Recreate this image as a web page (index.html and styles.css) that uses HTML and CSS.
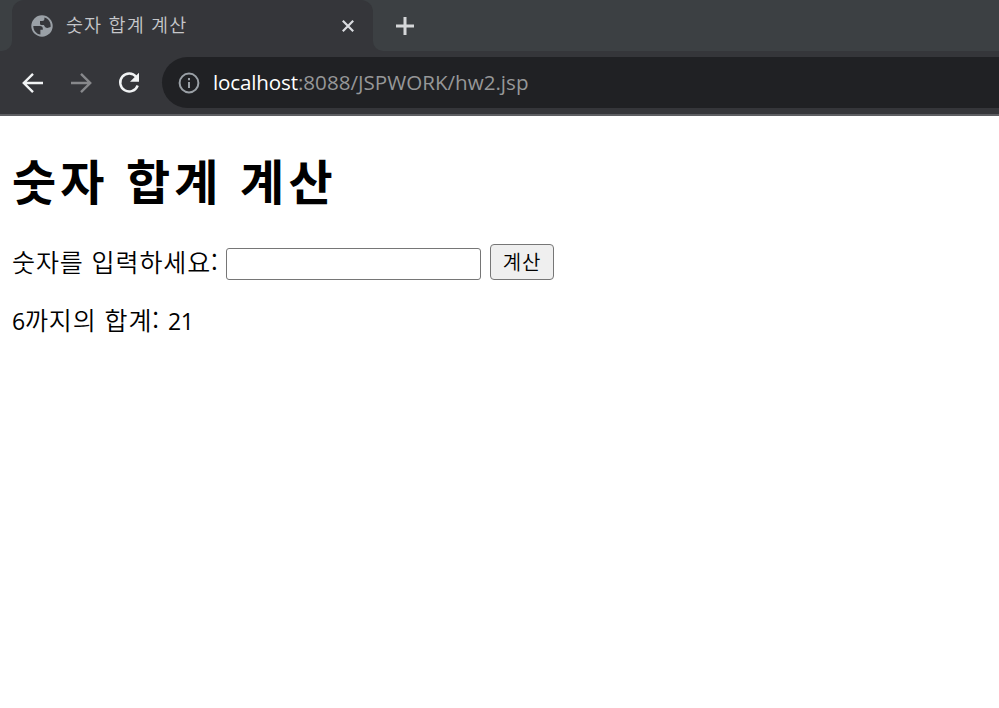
FILE: index.html
```html
<!DOCTYPE html>
<html lang="ko">
<head>
<meta charset="utf-8">
<title>숫자 합계 계산</title>
<link rel="stylesheet" href="styles.css">
</head>
<body>
<header class="browser">
  <div class="tabstrip">
    <div class="strip-left"></div>
    <div class="tab">
      <svg class="globe" viewBox="0 0 22 22"><circle cx="11" cy="11" r="10.7" fill="#9aa0a6"/><path d="M2.300 11H9c1.800 0 2.800 1 2.800 2.400v1.400H9.400v4.700C5.400 19 2.400 15.800 2.300 11ZM13.400 2.600V4c0 1.300-.8 2-2 2H9v2.400c0 1 .8 1.500 1.700 1.500h2.200c.8 1.900 1.800 3 3.500 3 1.200 0 2-.8 3.200-.8C20.200 7.500 17.400 3.700 13.400 2.600Z" fill="#35363a"/></svg>
      <span class="tab-title">숫자 합계 계산</span>
      <svg class="close" viewBox="0 0 14 14"><path d="M1.800 1.800 12.200 12.200M12.200 1.800 1.800 12.200" /></svg>
    </div>
    <div class="strip-right">
      <svg class="plus" viewBox="0 0 20 20"><path d="M10 1v18M1 10h18"/></svg>
    </div>
  </div>
  <div class="toolbar">
    <svg class="nav" viewBox="0 0 22 22"><path d="M21 11H2M11 1.800 1.800 11 11 20.200"/></svg>
    <svg class="nav dim" viewBox="0 0 22 22"><path d="M1 11h19M11 1.800 20.200 11 11 20.200"/></svg>
    <svg class="nav" viewBox="0 0 22 22"><path d="M18.200 4.800A9 9 0 1 0 19.700 13.500"/><path class="solid" d="M21 .8v9h-9z"/></svg>
    <div class="address">
      <svg class="info" viewBox="0 0 22 22"><circle cx="11" cy="11" r="9.400"/><path d="M11 10v6M11 6v2.200"/></svg>
      <span class="url"><b>localhost</b>:8088/JSPWORK/hw2.jsp</span>
    </div>
  </div>
</header>
<main class="page">
  <h1>숫자 합계 계산</h1>
  <form class="row">
    <label for="num">숫자를 입력하세요:</label>
    <input id="num" type="text">
    <button type="button">계산</button>
  </form>
  <p><span class="digits">6</span>까지의 합계: <span class="digits">21</span></p>
</main>
</body>
</html>
```
FILE: styles.css
```css
* { box-sizing: border-box; }
body {
  margin: 0;
  background: #fff;
  color: #000;
  font-family: "Open Sans", "Noto Sans CJK KR", sans-serif;
}
svg { display: block; flex: none; fill: none; }
.browser { height: 116px; background: #35363a; border-bottom: 2px solid #5d5e62; }
.tabstrip { display: flex; height: 51px; background: #35363a; }
.strip-left { width: 12px; background: #3c4043; border-bottom-right-radius: 10px; }
.tab {
  display: flex;
  align-items: center;
  width: 361px;
  padding: 0 18px 0 19px;
  background: linear-gradient(#3c4043, #3c4043) 0 0 / 100% 20px no-repeat;
  position: relative;
  z-index: 0;
}
.tab::before {
  content: "";
  position: absolute;
  inset: 0;
  z-index: -1;
  background: #35363a;
  border-radius: 12px 12px 0 0;
}
.globe { width: 22px; height: 22px; }
.tab-title {
  flex: 1;
  margin-left: 13px;
  padding-bottom: 3px;
  font: 350 18.5px/26px "Noto Sans CJK KR", sans-serif;
  letter-spacing: 1.1px;
  color: #c6c7ca;
}
.close { width: 14px; height: 14px; stroke: #dadce0; stroke-width: 2.2; }
.strip-right { flex: 1; background: #3c4043; border-bottom-left-radius: 10px; padding: 16px 0 0 22px; }
.plus { width: 20px; height: 20px; stroke: #d5d7d9; stroke-width: 3; }
.toolbar { display: flex; align-items: center; height: 63px; padding-left: 22px; gap: 26px; }
.nav { width: 22px; height: 22px; stroke: #f1f3f4; stroke-width: 2.4; }
.dim { stroke: #87888b; }
.solid { fill: #f1f3f4; stroke: none; }
.address {
  flex: 1;
  display: flex;
  align-items: center;
  height: 51px;
  margin-left: -4px;
  padding-left: 16px;
  background: #202124;
  border-radius: 26px 0 0 26px;
}
.info { width: 22px; height: 22px; stroke: #9aa0a6; stroke-width: 2; }
.url { margin-left: 13px; padding-bottom: 2px; font-size: 20.6px; line-height: 28px; color: #969798; white-space: nowrap; }
.url b { font-weight: 400; letter-spacing: -.15px; color: #fff; }
.page { padding: 31px 12px 0; }
h1 {
  margin: 0;
  font: 700 48px/64px "Noto Sans CJK KR", sans-serif;
  letter-spacing: 4.1px;
}
.row { display: flex; align-items: flex-start; margin-top: 33px; height: 36px; }
label { width: 214px; font: 350 25px/34px "Noto Sans CJK KR", sans-serif; letter-spacing: .9px; white-space: nowrap; }
input { width: 255px; height: 32px; margin: 4px 9px 0 0; border: 1px solid #767676; border-radius: 3px; background: #fff; }
button {
  width: 64px;
  height: 36px;
  padding: 0;
  border: 1px solid #767676;
  border-radius: 4px;
  background: #efefef;
  color: #000;
  font: 350 20px/34px "Noto Sans CJK KR", sans-serif;
  letter-spacing: .8px;
}
p { margin: 21px 0 0; font: 350 25px/36px "Noto Sans CJK KR", sans-serif; letter-spacing: .9px; }
.digits { font-family: "Open Sans", sans-serif; font-size: 23px; font-weight: 400; letter-spacing: -.2px; }
```
